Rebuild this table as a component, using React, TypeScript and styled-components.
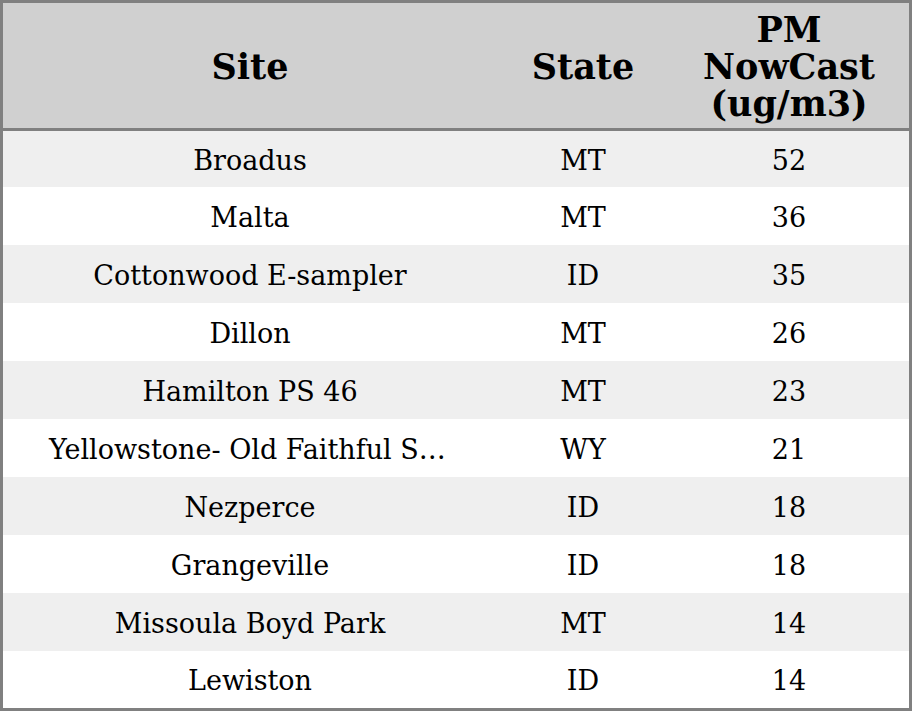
import React from "react";
import styled, { createGlobalStyle } from "styled-components";

const Global = createGlobalStyle`
  html, body { margin: 0; padding: 0; background: #ffffff; }
  body { font-family: "DejaVu Serif", serif; }
`;

const Frame = styled.div`
  width: 912px;
  height: 711px;
  box-sizing: border-box;
  border: 3px solid #808080;
  background: #ffffff;
  font-family: "DejaVu Serif", serif;
  color: #000;
  display: flex;
  flex-direction: column;
`;

const cols = "494px 172px 240px";

const HeadRow = styled.div`
  display: grid;
  grid-template-columns: ${cols};
  height: 125px;
  background: #d0d0d0;
  border-bottom: 3px solid #808080;
`;

const HeadCell = styled.div`
  display: flex;
  align-items: center;
  justify-content: center;
  text-align: center;
  font-size: 35px;
  font-weight: bold;
  line-height: 37px;
  padding-top: 2px;
`;

const Row = styled.div<{ $shade: boolean; $h: number }>`
  display: grid;
  grid-template-columns: ${cols};
  height: ${(p) => p.$h}px;
  background: ${(p) => (p.$shade ? "#efefef" : "#ffffff")};
  align-items: center;
`;

const Cell = styled.div`
  font-size: 27px;
  text-align: center;
  padding: 2px 46px 0;
  white-space: nowrap;
  overflow: hidden;
  text-overflow: ellipsis;
  min-width: 0;
`;

const rows: [string, string, number][] = [
  ["Broadus", "MT", 52],
  ["Malta", "MT", 36],
  ["Cottonwood E-sampler", "ID", 35],
  ["Dillon", "MT", 26],
  ["Hamilton PS 46", "MT", 23],
  ["Yellowstone- Old Faithful Snow Lodge", "WY", 21],
  ["Nezperce", "ID", 18],
  ["Grangeville", "ID", 18],
  ["Missoula Boyd Park", "MT", 14],
  ["Lewiston", "ID", 14],
];

const heights = [56, 58, 58, 58, 58, 58, 58, 58, 58, 57];

export default function App() {
  return (
    <>
      <Global />
      <Frame>
        <HeadRow>
          <HeadCell>Site</HeadCell>
          <HeadCell>State</HeadCell>
          <HeadCell>
            PM
            <br />
            NowCast
            <br />
            (ug/m3)
          </HeadCell>
        </HeadRow>
        {rows.map(([site, st, v], i) => (
          <Row key={i} $shade={i % 2 === 0} $h={heights[i]}>
            <Cell>{site}</Cell>
            <Cell>{st}</Cell>
            <Cell>{v}</Cell>
          </Row>
        ))}
      </Frame>
    </>
  );
}
